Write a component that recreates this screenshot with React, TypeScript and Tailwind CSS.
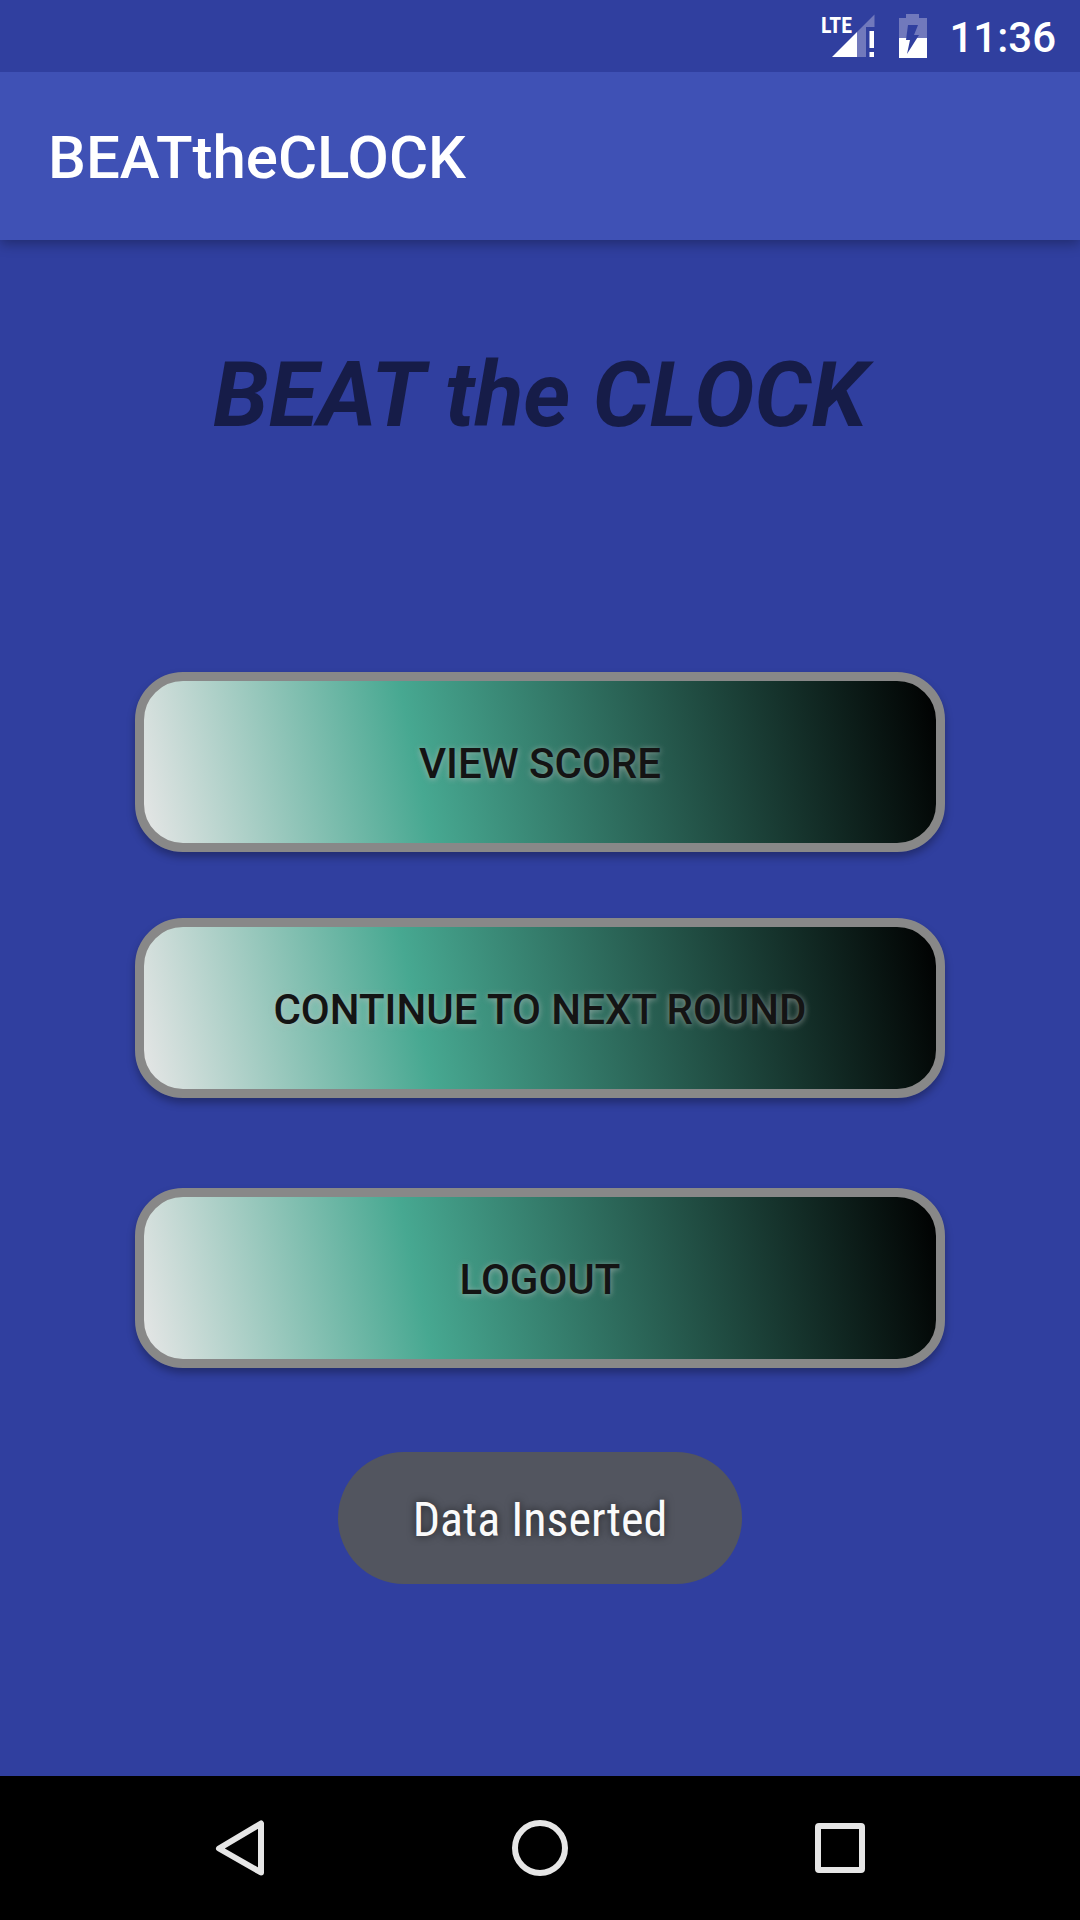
const buttonClass =
  "h-[180px] w-full rounded-[48px] border-[9px] border-[#888888] bg-[linear-gradient(78deg,#e6e6e6_0%,#47a891_35%,#000000_100%)] bg-origin-padding pt-[2px] text-[42px] font-medium text-[#141414] shadow-[0_5px_8px_rgba(0,0,0,0.3)] [text-shadow:0_1px_6px_rgba(190,190,190,0.7)]";

function SignalIcon() {
  return (
    <svg width="54" height="48" viewBox="0 0 54 48" aria-label="LTE signal" className="fill-white">
      <text x="0" y="21" fontSize="22" fontWeight="700" fontFamily="'Roboto Condensed', 'Roboto', sans-serif">
        LTE
      </text>
      <path d="M53.500 2.500V15H45V45H36V20Z" fill="#7179bc" />
      <path d="M36 20V45H11Z" />
      <path d="M48.500 19H53V36H48.500ZM48.500 40H53V45H48.500Z" />
    </svg>
  );
}

function BatteryIcon() {
  return (
    <svg width="28" height="48" viewBox="0 0 28 48" aria-label="Battery charging">
      <path d="M0 6H7V2H20V6H28V26H0Z" fill="#7179bc" />
      <path d="M0 26H28V46H0Z" fill="#fff" />
      <path d="M9 13H19L15 23H20L8 42L11 28H7Z" fill="#303f9f" />
    </svg>
  );
}

export default function App() {
  return (
    <div className="flex min-h-screen flex-col bg-[#303f9f] [font-family:Roboto,sans-serif]">
      <div className="relative z-20 flex h-[72px] items-center justify-end bg-[#303f9f] pr-6 text-white">
        <SignalIcon />
        <span className="ml-6 flex">
          <BatteryIcon />
        </span>
        <span className="ml-[22px] pt-[2px] text-[42px] font-medium">11:36</span>
      </div>
      <header className="z-10 flex h-[168px] items-center bg-[#3f51b5] px-12 pt-1 shadow-[0_4px_12px_rgba(0,0,0,0.3)]">
        <h1 className="text-[60px] font-medium text-white">BEATtheCLOCK</h1>
      </header>
      <main className="flex grow flex-col items-center px-[135px] pt-24">
        <h2 className="text-center text-[90px] leading-[120px] font-bold italic text-[#161c48]">BEAT the CLOCK</h2>
        <div className="mt-[216px] flex w-full flex-col">
          <button className={buttonClass}>VIEW SCORE</button>
          <button className={`mt-[66px] ${buttonClass}`}>CONTINUE TO NEXT ROUND</button>
          <button className={`mt-[90px] ${buttonClass}`}>LOGOUT</button>
        </div>
        <div
          role="status"
          className="mt-[84px] flex h-[132px] items-center rounded-full bg-[#52555f] px-[75px] pt-1 text-[48px] text-[#fafafa] [font-family:'Roboto_Condensed',Roboto,sans-serif] [text-shadow:0_0_8px_rgba(0,0,0,0.6)]"
        >
          Data Inserted
        </div>
      </main>
      <nav className="flex h-[144px] bg-black px-[90px]">
        <button aria-label="Back" className="flex flex-1 items-center justify-center">
          <svg width="60" height="60" viewBox="0 0 60 60" fill="none" stroke="#e6e6e6" strokeWidth="6" strokeLinejoin="round">
            <path d="M9 30.500L51 5.500V54.500Z" />
          </svg>
        </button>
        <button aria-label="Home" className="flex flex-1 items-center justify-center">
          <svg width="60" height="60" viewBox="0 0 60 60" fill="none" stroke="#e6e6e6" strokeWidth="6">
            <circle cx="30" cy="30" r="25" />
          </svg>
        </button>
        <button aria-label="Recent apps" className="flex flex-1 items-center justify-center">
          <svg width="60" height="60" viewBox="0 0 60 60" fill="none" stroke="#e6e6e6" strokeWidth="6">
            <rect x="8" y="8" width="44" height="44" rx="1" strokeLinejoin="round" />
          </svg>
        </button>
      </nav>
    </div>
  );
}
